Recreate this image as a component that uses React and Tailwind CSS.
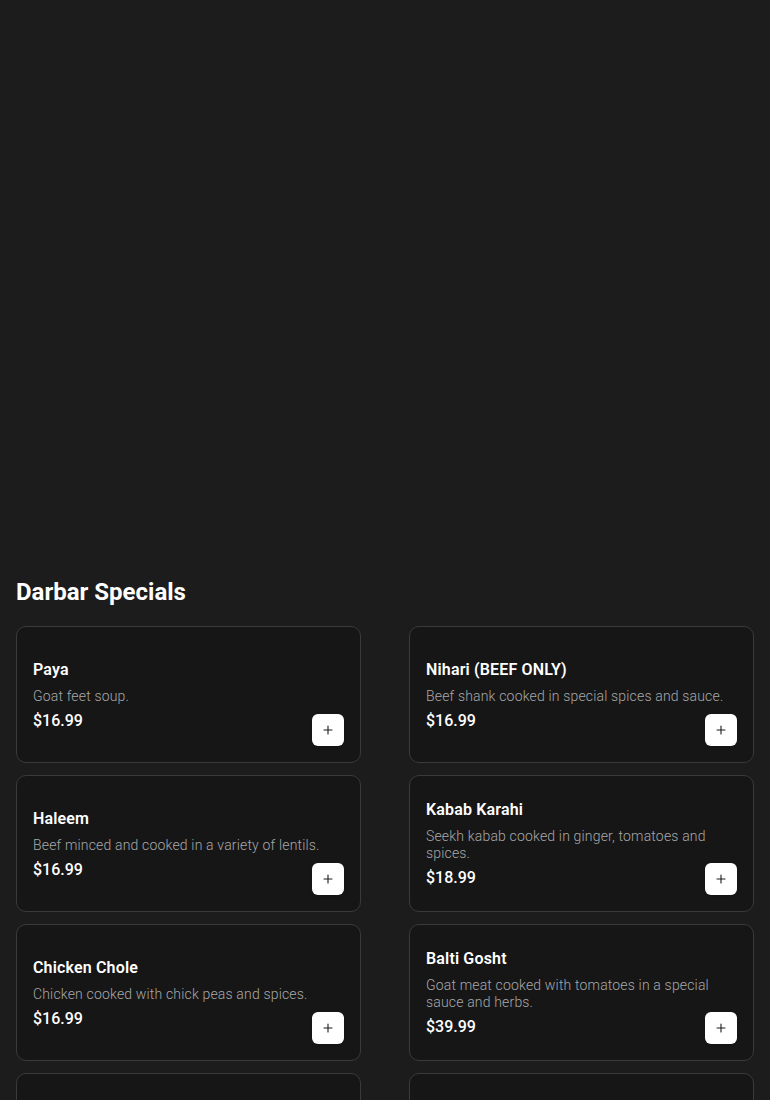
import React from "react";

const specials = [
  { name: "Paya", desc: "Goat feet soup.", price: "$16.99" },
  { name: "Nihari (BEEF ONLY)", desc: "Beef shank cooked in special spices and sauce.", price: "$16.99" },
  { name: "Haleem", desc: "Beef minced and cooked in a variety of lentils.", price: "$16.99" },
  { name: "Kabab Karahi", desc: "Seekh kabab cooked in ginger, tomatoes and spices.", price: "$18.99" },
  { name: "Chicken Chole", desc: "Chicken cooked with chick peas and spices.", price: "$16.99" },
  { name: "Balti Gosht", desc: "Goat meat cooked with tomatoes in a special sauce and herbs.", price: "$39.99" },
  { name: "Chicken Karahi", desc: "Chicken cooked in ginger, tomatoes and spices.", price: "$18.99" },
  { name: "Goat Karahi", desc: "Goat meat cooked in ginger, tomatoes and spices.", price: "$24.99" },
];

const MenuCard = ({ item }) => (
  <div className="relative h-[137px] rounded-[10px] border border-[#3a3a3c] bg-[#161617] px-4 flex flex-col justify-center">
    <div className="flex flex-col pt-px">
      <h3 className="text-base leading-6 font-semibold tracking-[0.01em] text-white">{item.name}</h3>
      <p className="mt-[6px] text-sm leading-[17px] font-light tracking-[0.012em] text-[#a8a8a8]">{item.desc}</p>
      <p className="mt-1 text-base leading-6 font-medium text-white">{item.price}</p>
    </div>
    {/* add-to-cart */}
    <button className="absolute right-4 bottom-4 w-8 h-8 rounded-md bg-white text-[#1c1c1d] flex items-center justify-center shadow">
      <svg width="12" height="12" viewBox="0 0 24 24" fill="none" stroke="currentColor" strokeWidth="2.2" strokeLinecap="round">
        <path d="M12 4v16M4 12h16" />
      </svg>
    </button>
  </div>
);

export default function App() {
  return (
    <div className="min-h-screen bg-[#1c1c1d] font-['Roboto',sans-serif]">
      {/* hero area (empty in the shot) */}
      <div className="h-[560px]" />

      <section className="px-4 pt-4 pb-8">
        <h2 className="text-2xl leading-8 font-bold text-white mb-[18px]">Darbar Specials</h2>
        <div className="grid grid-cols-2 gap-x-12 gap-y-3">
          {specials.map((item) => (
            <MenuCard key={item.name} item={item} />
          ))}
        </div>
      </section>
    </div>
  );
}
